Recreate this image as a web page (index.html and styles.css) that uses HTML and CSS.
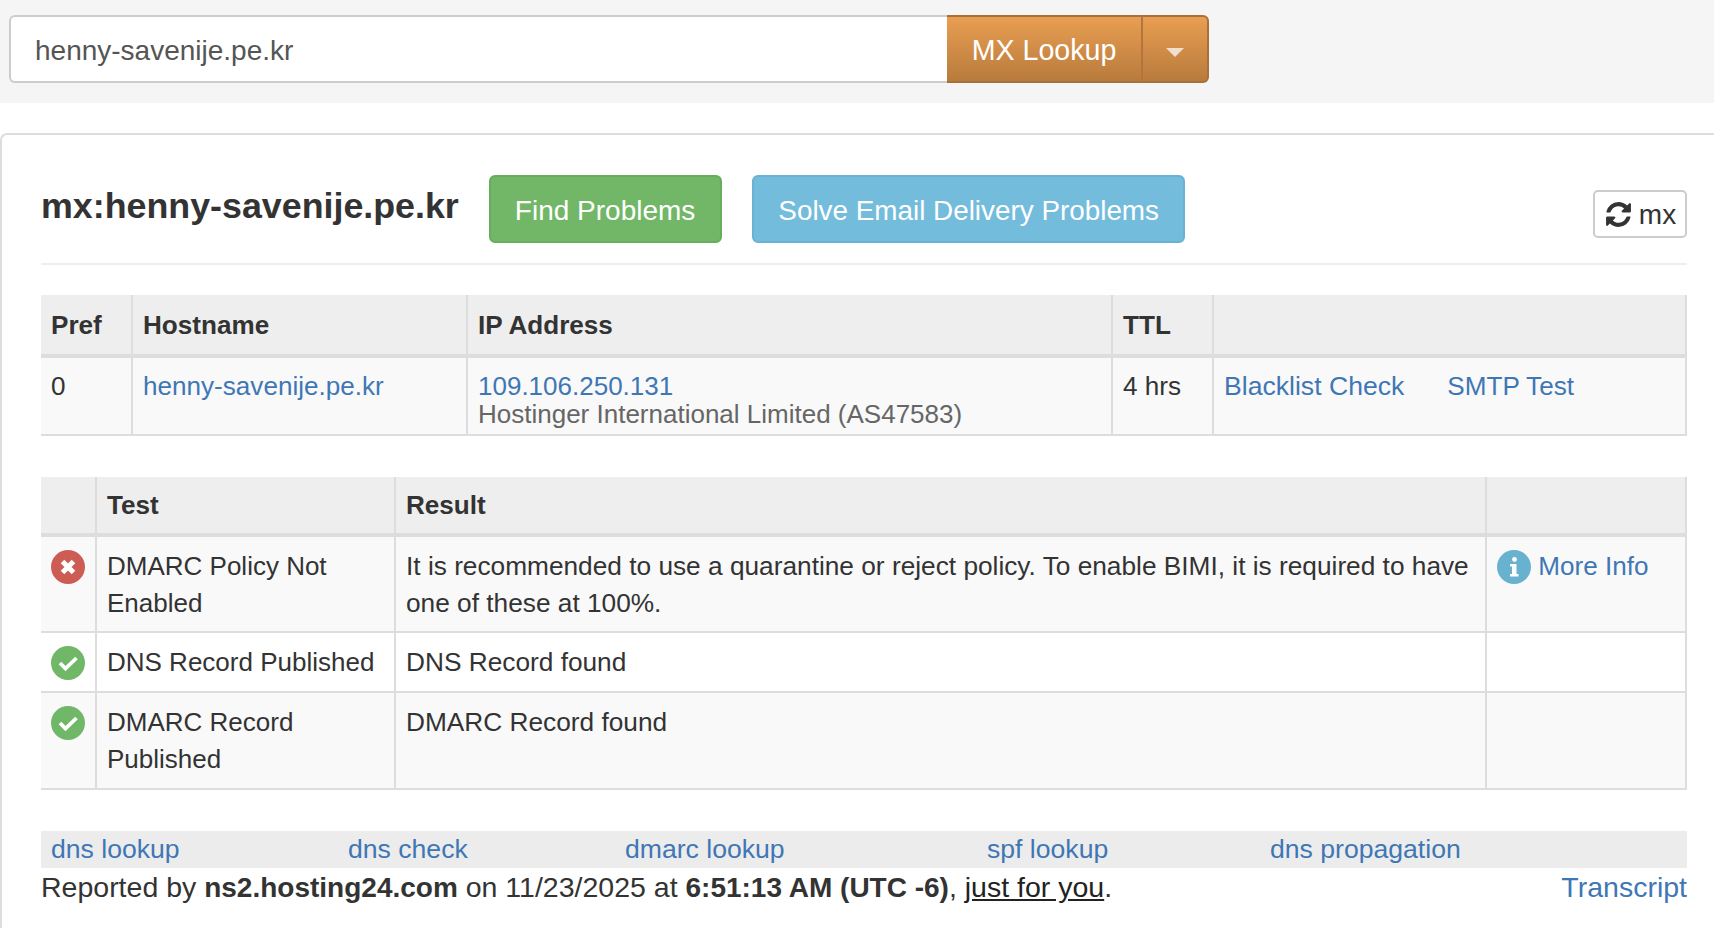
FILE: index.html
```html
<!DOCTYPE html>
<html>
<head>
    <title>MX Lookup</title>
    <link rel="stylesheet" href="styles.css">
</head>
<body>
    <div class="search-bar">
        <div class="search-group">
            <div class="search-input">henny-savenije.pe.kr</div>
            <div class="search-btn search-main">MX Lookup</div>
            <div class="search-btn search-caret"><span class="caret"></span></div>
        </div>
    </div>
    <div class="panel">
        <div class="title-row">
            <h1>mx:henny-savenije.pe.kr</h1>
            <div class="btn btn-green">Find Problems</div>
            <div class="btn btn-blue">Solve Email Delivery Problems</div>
            <div class="refresh-btn">
                <svg class="refresh-icon" viewBox="0 0 1792 1792"><path d="M1639 1056q0 5-1 7-64 268-268 434.5t-478 166.5q-146 0-282.5-55t-243.5-157l-129 129q-19 19-45 19t-45-19-19-45v-448q0-26 19-45t45-19h448q26 0 45 19t19 45-19 45l-137 137q71 66 161 102t187 36q134 0 250-65t186-179q11-17 53-117 8-23 30-23h192q13 0 22.5 9.5t9.5 22.5zm25-800v448q0 26-19 45t-45 19h-448q-26 0-45-19t-19-45 19-45l138-138q-148-137-349-137-134 0-250 65t-186 179q-11 17-53 117-8 23-30 23h-199q-13 0-22.5-9.5t-9.5-22.5v-7q65-268 270-434.5t480-166.5q146 0 284 55.5t245 156.5l130-129q19-19 45-19t45 19 19 45z"/></svg>
                <span>mx</span>
            </div>
        </div>

        <table class="data-table hosts">
            <colgroup>
                <col class="c-pref"><col class="c-host"><col class="c-ip"><col class="c-ttl"><col>
            </colgroup>
            <thead>
                <tr><th>Pref</th><th>Hostname</th><th>IP Address</th><th>TTL</th><th></th></tr>
            </thead>
            <tbody>
                <tr class="odd">
                    <td>0</td>
                    <td><a href="#">henny-savenije.pe.kr</a></td>
                    <td class="ip-cell"><a href="#">109.106.250.131</a><div class="asn">Hostinger International Limited (AS47583)</div></td>
                    <td>4 hrs</td>
                    <td><a href="#" class="action-link">Blacklist Check</a><a href="#">SMTP Test</a></td>
                </tr>
            </tbody>
        </table>

        <table class="data-table tests">
            <colgroup>
                <col class="c-status"><col class="c-test"><col class="c-result"><col>
            </colgroup>
            <thead>
                <tr><th></th><th>Test</th><th>Result</th><th></th></tr>
            </thead>
            <tbody>
                <tr class="odd row-first">
                    <td class="status-cell">
                        <svg class="status-icon" viewBox="0 0 34 34"><circle cx="17" cy="17" r="17" fill="#cd5c55"/><path d="M11.5 11.5l11 11M22.5 11.5l-11 11" stroke="#fff" stroke-width="5" fill="none"/></svg>
                    </td>
                    <td class="test-name">DMARC Policy Not Enabled</td>
                    <td class="test-result">It is recommended to use a quarantine or reject policy. To enable BIMI, it is required to have one of these at 100%.</td>
                    <td>
                        <svg class="status-icon" viewBox="0 0 34 34"><circle cx="17" cy="17" r="17" fill="#68b1cf"/><circle cx="17.5" cy="9.5" r="2.4" fill="#fff"/><path d="M13 14h6.5v10h2v2.5h-8.500v-2.500h2v-7.500h-2z" fill="#fff"/></svg>
                        <a href="#">More Info</a>
                    </td>
                </tr>
                <tr>
                    <td class="status-cell">
                        <svg class="status-icon" viewBox="0 0 34 34"><circle cx="17" cy="17" r="17" fill="#70b767"/><path d="M9 17l5.500 5.500 11-10.500" stroke="#fff" stroke-width="3.800" fill="none"/></svg>
                    </td>
                    <td class="test-name">DNS Record Published</td>
                    <td class="test-result">DNS Record found</td>
                    <td></td>
                </tr>
                <tr class="odd">
                    <td class="status-cell">
                        <svg class="status-icon" viewBox="0 0 34 34"><circle cx="17" cy="17" r="17" fill="#70b767"/><path d="M9 17l5.500 5.500 11-10.500" stroke="#fff" stroke-width="3.800" fill="none"/></svg>
                    </td>
                    <td class="test-name">DMARC Record Published</td>
                    <td class="test-result">DMARC Record found</td>
                    <td></td>
                </tr>
            </tbody>
        </table>

        <div class="tool-links">
            <a href="#" class="tl-1">dns lookup</a>
            <a href="#" class="tl-2">dns check</a>
            <a href="#" class="tl-3">dmarc lookup</a>
            <a href="#" class="tl-4">spf lookup</a>
            <a href="#">dns propagation</a>
        </div>
        <div class="report-line">
            <div>Reported by <b>ns2.hosting24.com</b> on 11/23/2025 at <b>6:51:13 AM (UTC -6)</b>, <a href="#" class="plain-link">just for you</a>.</div>
            <a href="#">Transcript</a>
        </div>
    </div>
</body>
</html>
```

FILE: styles.css
```css
html, body {
    height: 928px;
    overflow: hidden;
}

body {
    font-family: "Liberation Sans", Arial, sans-serif;
    font-size: 26.1px;
    line-height: 37px;
    color: #333;
    background-color: #fff;
    margin: 0;
    padding: 0;
}

a {
    color: #3f77b5;
    text-decoration: none;
}

.search-bar {
    background-color: #f5f5f5;
    height: 103px;
    padding: 15px 9px 0;
    box-sizing: border-box;
}

.search-group {
    display: flex;
    height: 68px;
    font-size: 28px;
}

.search-input {
    width: 938px;
    box-sizing: border-box;
    background-color: #fff;
    border: 2px solid #ccc;
    border-right: none;
    border-radius: 6px 0 0 6px;
    padding: 0 24px;
    line-height: 67px;
    color: #555;
}

.search-btn {
    box-sizing: border-box;
    background: linear-gradient(#e99e52, #b87b3d);
    border: 2px solid #a9703a;
    border-left: none;
    color: #fff;
    line-height: 67px;
}

.search-main {
    width: 196px;
    font-size: 28.6px;
    text-align: center;
    border-right: 2px solid #b0763c;
}

.search-caret {
    width: 66px;
    border-radius: 0 6px 6px 0;
    display: flex;
    align-items: center;
    justify-content: center;
    padding-top: 6px;
}

.caret {
    width: 0;
    height: 0;
    border-left: 9px solid transparent;
    border-right: 9px solid transparent;
    border-top: 9px solid #f0dfcc;
}

.panel {
    margin-top: 30px;
    border: 2px solid #ddd;
    border-right: none;
    border-bottom: none;
    border-radius: 7px 0 0 0;
    padding: 39px 27px 0 39px;
    height: 795px;
    box-sizing: border-box;
}

.title-row {
    display: flex;
    align-items: flex-start;
    border-bottom: 2px solid #eee;
    height: 89px;
}

h1 {
    font-size: 35.8px;
    line-height: 62px;
    font-weight: bold;
    margin: 1px 30px 0 0;
}

.btn {
    height: 68px;
    line-height: 67px;
    font-size: 28px;
    box-sizing: border-box;
    border-radius: 6px;
    color: #fff;
    padding: 0 24px;
    margin: 1px 30px 0 0;
}

.btn-green {
    padding-right: 25px;
    background-color: #71b767;
    border: 2px solid #66ad5c;
}

.btn-blue {
    font-size: 27.85px;
    background-color: #74bcdc;
    border: 2px solid #68b2d3;
}

.refresh-btn {
    margin: 16px 0 0 auto;
    width: 94px;
    height: 48px;
    box-sizing: border-box;
    border: 2px solid #ccc;
    border-radius: 5px;
    display: flex;
    align-items: center;
    justify-content: center;
    gap: 6px;
    font-size: 28px;
}

.refresh-icon {
    width: 29px;
    height: 29px;
    fill: #333;
}

.data-table {
    width: 1646px;
    table-layout: fixed;
    border-collapse: collapse;
}

.hosts {
    margin-top: 30px;
}

.tests {
    margin-top: 41px;
}

.data-table th {
    background-color: #eee;
    font-weight: bold;
    text-align: left;
    padding: 12px 10px 10px;
    border-left: 2px solid #ddd;
    border-right: 2px solid #ddd;
    border-bottom: 4px solid #ddd;
    height: 37px;
}

.tests th {
    padding: 10px 10px 9px;
}

.data-table td {
    vertical-align: top;
    padding: 10px;
    border: 2px solid #ddd;
}

.tests td {
    padding: 11px 10px 10px;
}

.tests .row-first td {
    padding-bottom: 9px;
}

.data-table th:first-child,
.data-table td:first-child {
    border-left: none;
}

.data-table tr.odd td {
    background-color: #f9f9f9;
}

.c-pref { width: 91px; }
.c-host { width: 335px; }
.c-ip { width: 645px; }
.c-ttl { width: 101px; }

.c-status { width: 55px; }
.c-test { width: 299px; }
.c-result { width: 1091px; }

.ip-cell {
    line-height: 28px;
}

.ip-cell a {
    display: block;
    padding-top: 4px;
    font-size: 26px;
}

.data-table td.ip-cell {
    padding-bottom: 6px;
}

.asn {
    color: #666;
    font-size: 26px;
}

.action-link {
    margin-right: 43px;
    font-size: 26.6px;
}

.test-name {
    font-size: 26px;
}

.test-result {
    font-size: 26.25px;
}

.status-cell {
    line-height: 0;
}

.status-icon {
    width: 34px;
    height: 34px;
    vertical-align: top;
    margin-top: 2px;
}

.tool-links {
    margin-top: 41px;
    background-color: #ececec;
    height: 37px;
    padding-left: 10px;
    display: flex;
    font-size: 26.6px;
}

.tl-1 { width: 297px; }
.tl-2 { width: 277px; }
.tl-3 { width: 362px; }
.tl-4 { width: 283px; }

.report-line {
    display: flex;
    justify-content: space-between;
    width: 1646px;
    font-size: 28.5px;
    line-height: 39px;
}

.report-line b {
    font-size: 28px;
}

.plain-link {
    color: #222;
    text-decoration: underline;
}
```
